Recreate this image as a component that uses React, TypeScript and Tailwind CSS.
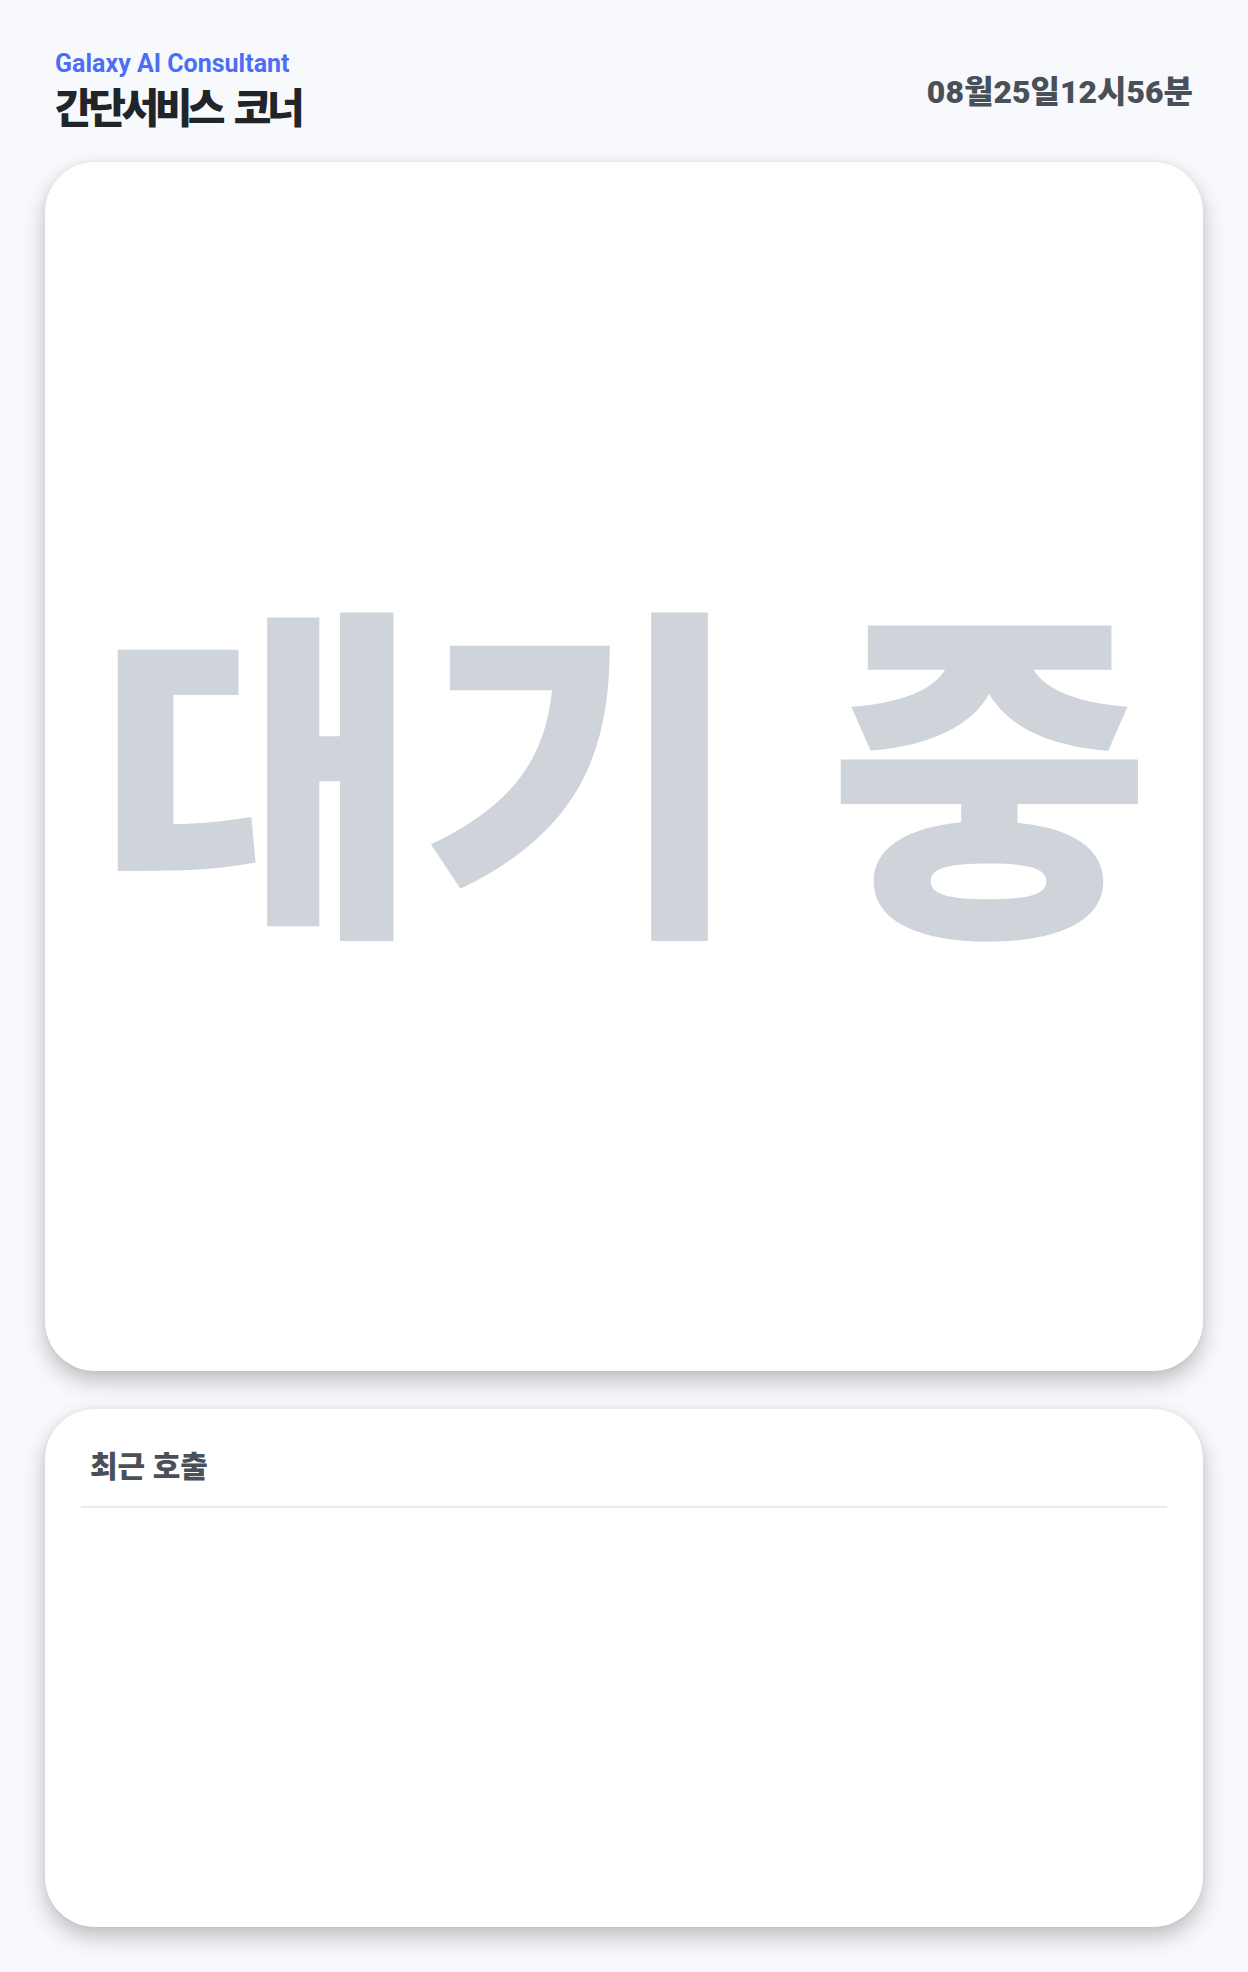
import React from "react";

const sans = "font-['Roboto','Noto_Sans_CJK_KR',sans-serif]";
const cardShadow = "shadow-[0_10px_22px_rgba(0,0,0,0.24),0_0_6px_rgba(0,0,0,0.05)]";

function Header() {
  return (
    <header className="flex items-center justify-between px-[10px] pt-[49px]">
      <div className="flex flex-col">
        <span className="text-[25px] font-bold leading-[1.2] text-[#4c6ef5]">Galaxy AI Consultant</span>
        <h1 className="mt-[6px] text-[41px] font-black leading-[1.2] tracking-[-0.11em] [word-spacing:7px] text-[#212529]">
          간단서비스 코너
        </h1>
      </div>
      <div className="text-[32px] font-black leading-none text-[#495057]">08월25일12시56분</div>
    </header>
  );
}

function WaitingCard() {
  return (
    <section className={`mt-[28px] flex h-[1209px] items-center justify-center rounded-[50px] bg-white ${cardShadow}`}>
      <span className="pt-[42px] text-[350px] font-black leading-none text-[#ced4da]">대기 중</span>
    </section>
  );
}

function RecentCalls() {
  return (
    <section className={`mt-[38px] h-[518px] rounded-[50px] bg-white px-[36px] pt-[38px] ${cardShadow}`}>
      <h2 className="border-b-2 border-[#e9ecef] px-[9px] pb-[20px] text-[30px] font-black leading-[1.3] text-[#495057]">
        최근 호출
      </h2>
    </section>
  );
}

export default function App() {
  return (
    <div className={`min-h-screen bg-[#f8f9fc] px-[45px] pb-[45px] ${sans}`}>
      <Header />
      <WaitingCard />
      <RecentCalls />
    </div>
  );
}
